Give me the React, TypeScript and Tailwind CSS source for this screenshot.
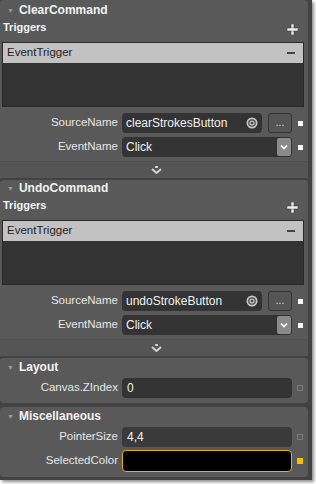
import type { ReactNode } from 'react';

const font = { fontFamily: '"Liberation Sans", Arial, sans-serif' };

function SectionHeader({ title }: { title: string }) {
  return (
    <div className="flex h-[16px] items-center pl-[7px]">
      <span className="mr-[5px] text-[7px] leading-none text-[#9a9a9a]">▼</span>
      <span className="text-[12px] font-bold text-[#f2f2f2]">{title}</span>
    </div>
  );
}

function Marker({ kind }: { kind: 'set' | 'empty' | 'yellow' }) {
  if (kind === 'set') return <span className="ml-[6px] block size-[5px] bg-white" />;
  if (kind === 'yellow') return <span className="ml-[5px] block size-[6px] bg-[#f5c000]" />;
  return <span className="ml-[5px] block size-[6px] border border-[#7a7a7a]" />;
}

function Row({ label, children, marker }: { label: string; children: ReactNode; marker: 'set' | 'empty' | 'yellow' }) {
  return (
    <div className="flex items-center">
      <div className="w-[122px] pr-[4px] text-right text-[11.5px] text-[#e6e6e6]">{label}</div>
      <div className="flex w-[170px] items-center">{children}</div>
      <Marker kind={marker} />
    </div>
  );
}

function TargetIcon() {
  return (
    <svg width="12" height="12" viewBox="0 0 12 12">
      <circle cx="6" cy="6" r="5.5" fill="#c8c8c8" />
      <circle cx="6" cy="6" r="3.8" fill="#444" />
      <circle cx="6" cy="6" r="2.6" fill="#c8c8c8" />
      <circle cx="6" cy="6" r="1.3" fill="#444" />
    </svg>
  );
}

function Expander() {
  return (
    <div className="mt-[4px] flex h-[17px] items-center justify-center border-t border-[#505050] bg-[#555555] pl-[4px]">
      <svg width="11" height="8" viewBox="0 0 11 8">
        <rect x="4" y="0" width="3" height="2" fill="#d0d0d0" />
        <polyline points="1,3 5.5,7 10,3" fill="none" stroke="#d0d0d0" strokeWidth="2" />
      </svg>
    </div>
  );
}

function TriggerSection({ title, source, first }: { title: string; source: string; first?: boolean }) {
  return (
    <div className={first ? 'rounded-[4px] bg-[#595959] pt-[2px]' : 'rounded-[4px] bg-[#595959]'}>
      <SectionHeader title={title} />
      <div className="flex h-[18px] items-center justify-between pl-[3px] pr-[10px]">
        <span className="text-[11px] font-bold text-[#f2f2f2]">Triggers</span>
        <svg width="11" height="11" viewBox="0 0 11 11" className="mt-[4px]">
          <rect x="4" y="0" width="3" height="11" fill="#ececec" stroke="#333" strokeWidth="0.5" />
          <rect x="0" y="4" width="11" height="3" fill="#ececec" stroke="#333" strokeWidth="0.5" />
          <rect x="4.25" y="4.25" width="2.5" height="2.5" fill="#ececec" />
        </svg>
      </div>
      <div className="mx-[2px] mt-[6px] h-[65px] w-[302px] border border-[#2a2a2a] bg-[#333333]">
        <div className="flex h-[20px] items-center justify-between bg-[#c2c2c2] pl-[4px] pr-[8px]">
          <span className="text-[11.5px] text-[#222]">EventTrigger</span>
          <span className="block h-[2px] w-[8px] bg-[#444]" />
        </div>
      </div>
      <div className="mt-[6px] flex flex-col gap-[4px]">
        <Row label="SourceName" marker="set">
          <div className="flex h-[20px] w-[140px] items-center justify-between rounded-[4px] bg-[#333333] pl-[4px] pr-[4px]">
            <span className="text-[12px] text-[#f2f2f2]">{source}</span>
            <TargetIcon />
          </div>
          <div className="ml-[6px] flex h-[20px] w-[24px] items-end justify-center rounded-[3px] border border-[#333] bg-[#555] pb-[4px] text-[10px] leading-none text-[#e0e0e0]">
            ...
          </div>
        </Row>
        <Row label="EventName" marker="set">
          <div className="flex h-[20px] w-[170px] items-center justify-between rounded-[4px] bg-[#333333] pl-[4px] pr-[1px]">
            <span className="text-[12px] text-[#f2f2f2]">Click</span>
            <div className="flex h-[18px] w-[14px] items-center justify-center rounded-[2px] bg-[#8a8a8a]">
              <svg width="8" height="6" viewBox="0 0 8 6">
                <polyline points="1,1.5 4,4.5 7,1.5" fill="none" stroke="#fff" strokeWidth="1.6" />
              </svg>
            </div>
          </div>
        </Row>
      </div>
      <Expander />
    </div>
  );
}

export default function App() {
  return (
    <div className="h-[484px] w-[316px] bg-white" style={font}>
      <div className="flex h-[480px] w-[312px] flex-col bg-[#424242] pr-[4px] shadow-[2px_2px_3px_rgba(0,0,0,0.45)]">
        <TriggerSection title="ClearCommand" source="clearStrokesButton" first />
        <div className="mt-[2px]">
          <TriggerSection title="UndoCommand" source="undoStrokeButton" />
        </div>
        <div className="mt-[2px] h-[45px] rounded-[4px] bg-[#595959] pt-[1px]">
          <SectionHeader title="Layout" />
          <div className="mt-[3px]">
            <Row label="Canvas.ZIndex" marker="empty">
              <div className="flex h-[20px] w-[170px] items-center rounded-[4px] bg-[#333333] pl-[5px]">
                <span className="text-[12px] text-[#f2f2f2]">0</span>
              </div>
            </Row>
          </div>
        </div>
        <div className="mt-[4px] h-[70px] rounded-[4px] bg-[#595959] pt-[1px]">
          <SectionHeader title="Miscellaneous" />
          <div className="mt-[3px] flex flex-col gap-[3px]">
            <Row label="PointerSize" marker="empty">
              <div className="flex h-[20px] w-[170px] items-center rounded-[4px] bg-[#3a3a3a] pl-[5px]">
                <span className="text-[12px] text-[#f2f2f2]">4,4</span>
              </div>
            </Row>
            <Row label="SelectedColor" marker="yellow">
              <div className="h-[22px] w-[170px] rounded-[4px] border border-[#e8b400] bg-black" />
            </Row>
          </div>
        </div>
      </div>
    </div>
  );
}
